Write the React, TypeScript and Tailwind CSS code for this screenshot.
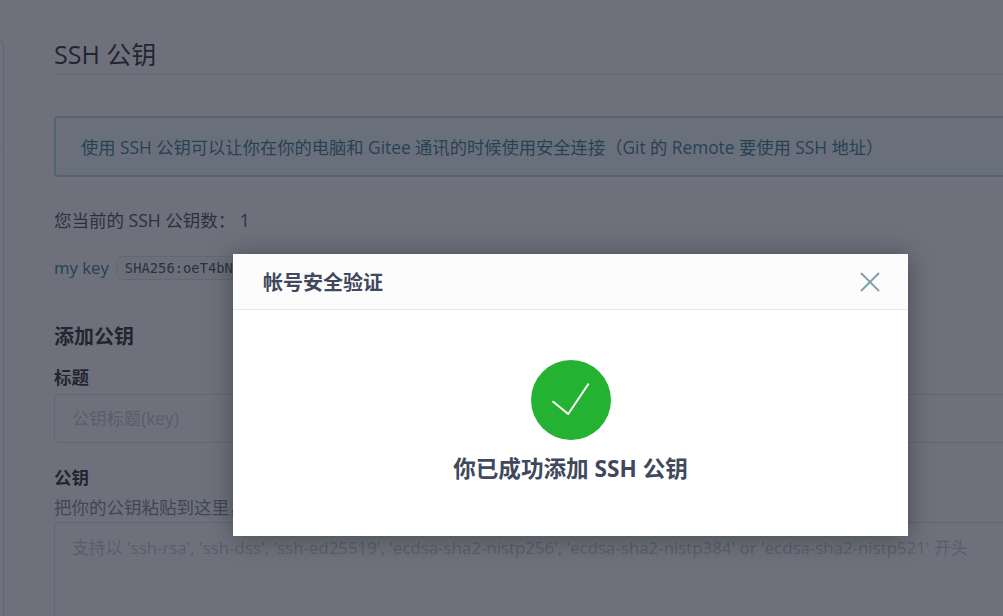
import React from 'react';
import { X } from 'lucide-react';

export default function App() {
  return (
    <div className="relative h-[616px] w-full overflow-hidden bg-white font-['Open_Sans','Noto_Sans_CJK_SC',sans-serif] text-[#40485b]">
      {/* Page behind the dimmer */}
      <div className="flex items-start">
        {/* Side menu, only its right edge is in view */}
        <div className="mt-[40px] h-[576px] w-[4px] shrink-0 rounded-tr-[4px] border-r border-t border-[#d8dae0]">
          <div className="mt-[106px] border-t border-[#e8e9ed]" />
        </div>

        <main className="ml-[50px] w-[1100px] shrink-0">
          <h1 className="mt-[36px] border-b border-[#dfe1e6] pb-[1px] text-[25px] leading-[37px] font-normal text-black">
            SSH 公钥
          </h1>

          <div className="mt-[41px] flex h-[61px] items-center rounded-[4px] border-2 border-[#a9d5de] bg-[#f0fafb] pt-[3px] pl-[25px] text-[17.3px] text-[#0f5c7a]">
            使用 SSH 公钥可以让你在你的电脑和 Gitee 通讯的时候使用安全连接（Git 的 Remote 要使用 SSH 地址）
          </div>

          <p className="mt-[31px] text-[17.5px] leading-[24px] text-[#1f2538]">您当前的 SSH 公钥数： 1</p>

          <div className="mt-[24px] flex h-[24px] items-center gap-[7px] text-[16.75px]">
            <span className="text-[#005980]">my key</span>
            <code className="rounded-[6px] border border-[#d8dae0] bg-[#f6f7f9] px-[8px] font-['DejaVu_Sans_Mono',monospace] text-[13.8px] leading-[22px] text-[#1f2538]">
              SHA256:oeT4bN7kq2Vd
            </code>
          </div>

          <h2 className="mt-[45px] text-[20px] leading-[24px] font-bold text-black">添加公钥</h2>

          <label className="mt-[17px] block text-[17.5px] leading-[22px] font-bold text-black">标题</label>
          <input
            className="mt-[6px] block h-[49px] w-full rounded-[4px] border border-[#d8dae0] pl-[17px] text-[17.3px] outline-none placeholder:text-[#bbbdc4]"
            placeholder="公钥标题(key)"
          />

          <label className="mt-[23px] block text-[17.5px] leading-[22px] font-bold text-black">公钥</label>
          <p className="mt-[8px] text-[17.5px] leading-[22px] text-[#6a6e79]">把你的公钥粘贴到这里，查看怎样生成公钥</p>
          <textarea
            className="mt-[4px] block h-[160px] w-full resize-none rounded-[4px] border border-[#d8dae0] px-[17px] py-[13px] text-[16.85px] leading-[24px] outline-none placeholder:text-[#bbbdc4]"
            placeholder="支持以 'ssh-rsa', 'ssh-dss', 'ssh-ed25519', 'ecdsa-sha2-nistp256', 'ecdsa-sha2-nistp384' or 'ecdsa-sha2-nistp521' 开头"
          />
        </main>
      </div>

      {/* Dimmer */}
      <div className="absolute inset-0 bg-[#313444]/70" />

      {/* Dialog */}
      <div className="absolute top-[254px] left-[233px] h-[282px] w-[675px] bg-white shadow-[0_2px_24px_rgba(0,0,0,0.35)]">
        <div className="flex h-[56px] items-center justify-between border-b border-[#e8e8ea] bg-[#fcfcfd] pr-[21px] pl-[30px]">
          <span className="pt-[2px] text-[20px] font-bold text-[#40485b]">帐号安全验证</span>
          <X size={34} strokeWidth={1.8} absoluteStrokeWidth className="text-[#7e9eaa]" />
        </div>
        <div className="flex flex-col items-center pt-[50px]">
          <div className="flex h-[80px] w-[80px] items-center justify-center rounded-full bg-[#24b233]">
            <svg width="40" height="34" viewBox="0 0 40 34" fill="none" stroke="#ffffff" strokeWidth="2" strokeLinecap="round" strokeLinejoin="round">
              <path d="M2.2 18.7 L17.2 31 L37.2 1.3" />
            </svg>
          </div>
          <p className="mt-[13px] text-[22.6px] leading-[32px] font-bold text-[#40485b]">你已成功添加 SSH 公钥</p>
        </div>
      </div>
    </div>
  );
}
